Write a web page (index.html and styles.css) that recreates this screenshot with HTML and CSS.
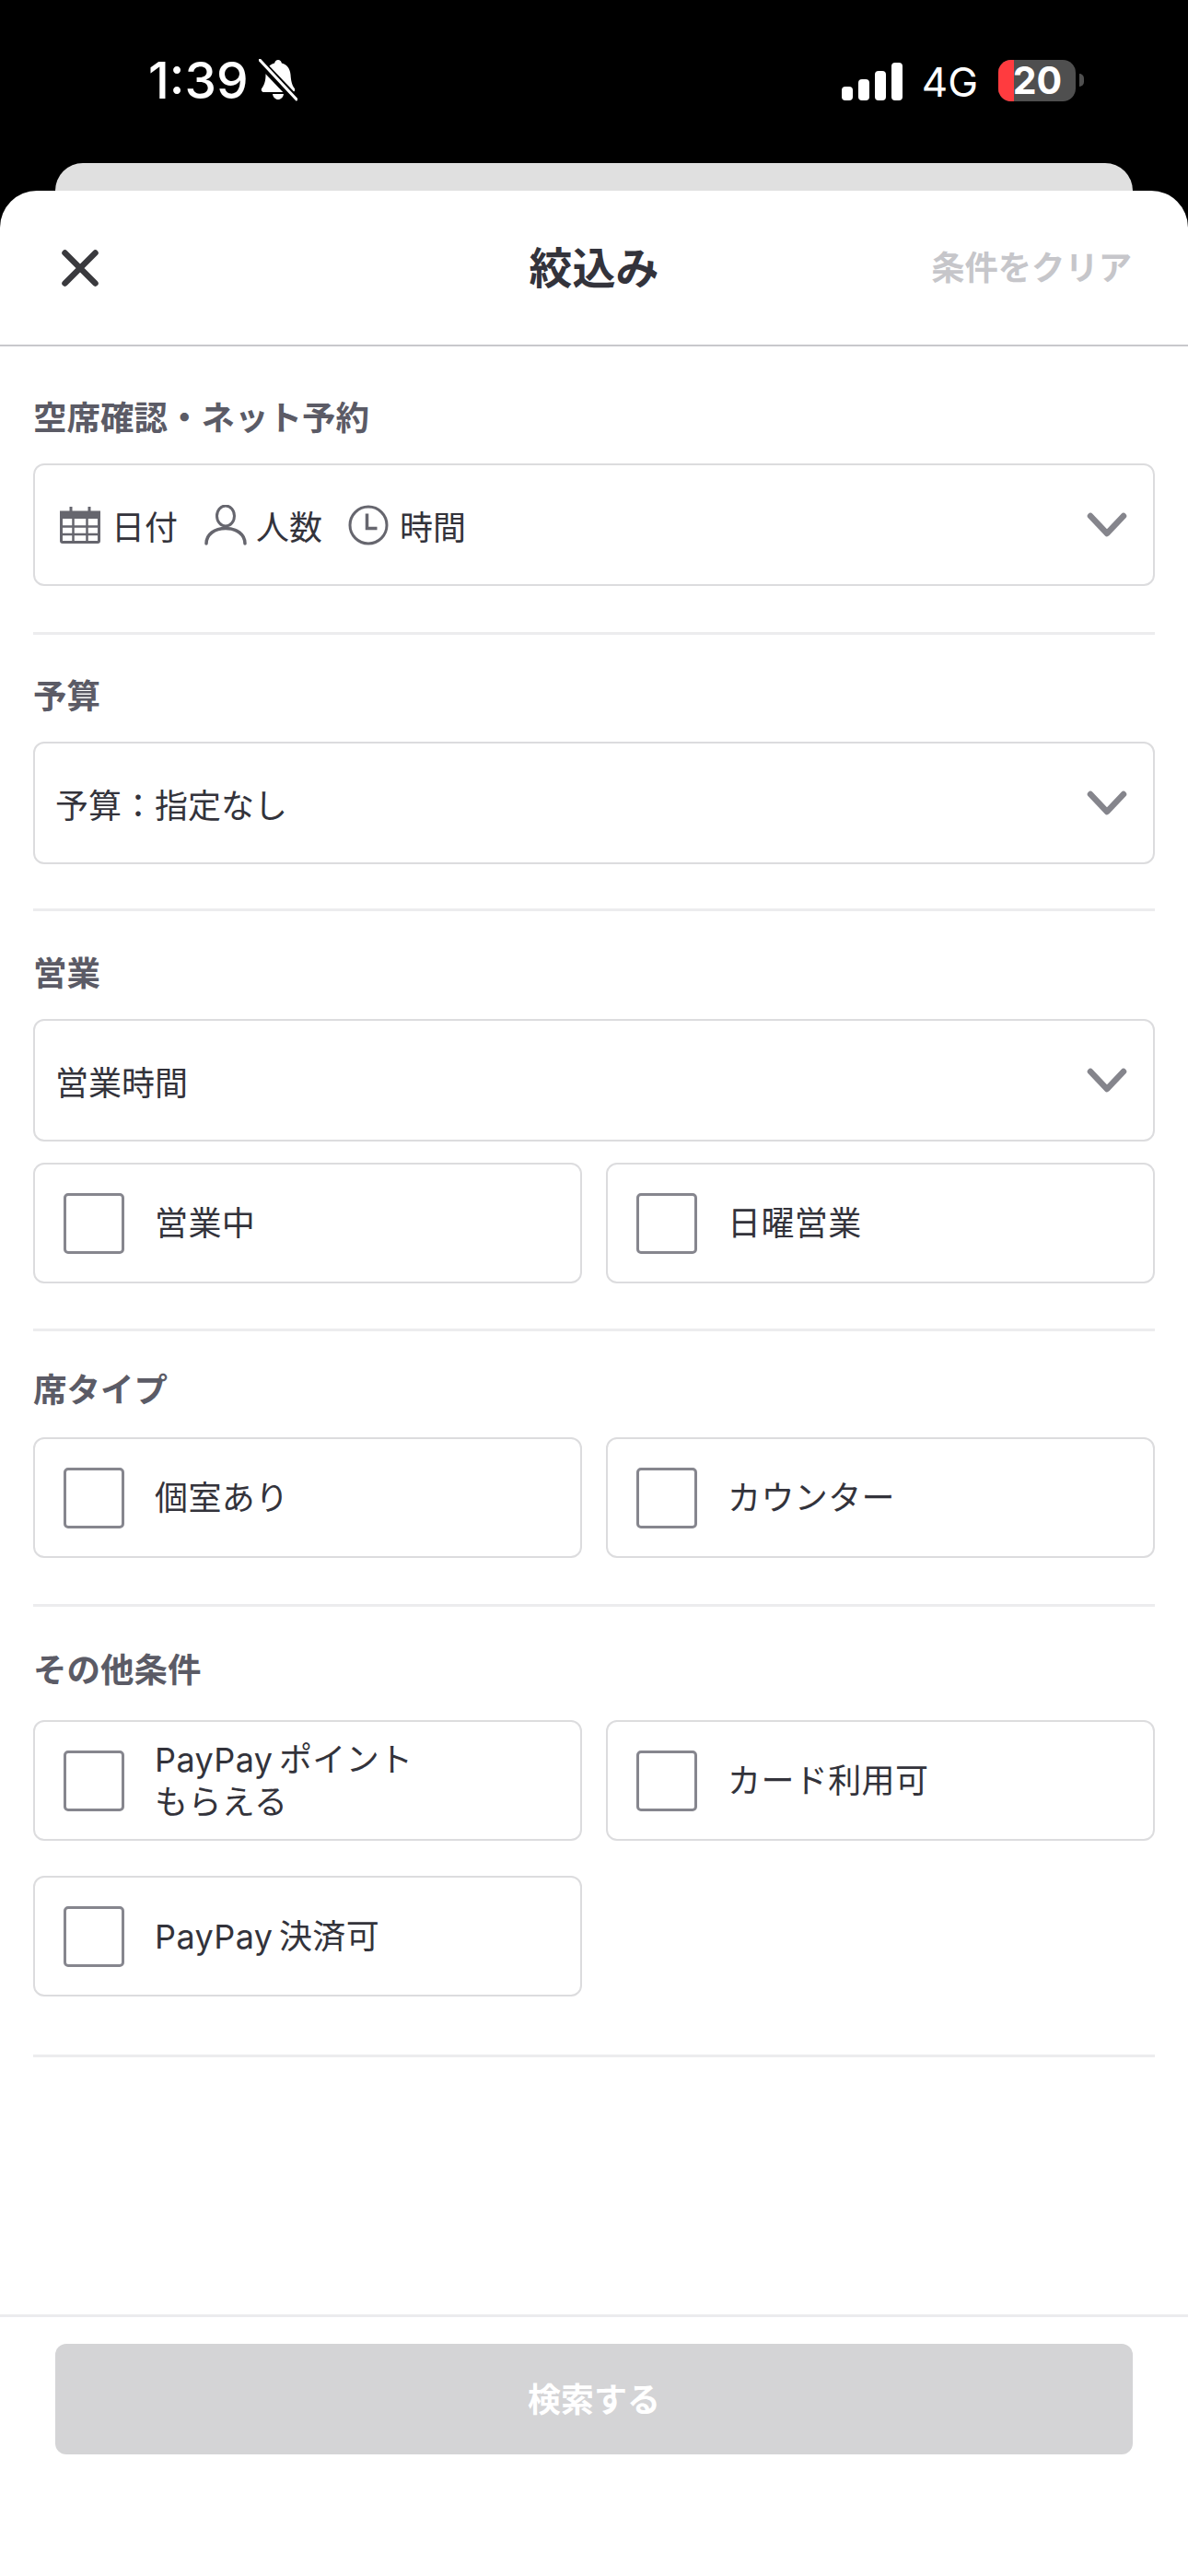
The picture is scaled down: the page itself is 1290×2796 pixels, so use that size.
FILE: index.html
```html
<!DOCTYPE html>
<html lang="ja">
<head>
    <meta charset="UTF-8">
    <meta name="viewport" content="width=device-width, initial-scale=1.0">
    <title>絞込み</title>
    <link rel="stylesheet" href="styles.css">
</head>
<body>
    <div class="status-bar">
        <div class="status-left">
            <span class="clock">1:39</span>
            <svg class="bell" width="42" height="46" viewBox="0 0 42 46">
                <path d="M21 1c2 0 3.500 1.500 3.800 3.500C31 6 34 11 34.500 17c.5 7 1.500 11 4 14.500 1.500 2 .5 4.500-2 4.500H5.500c-2.500 0-3.500-2.500-2-4.500C6 28 7.500 24 7.500 17 8 11 11 6 17.200 4.500 17.500 2.500 19 1 21 1z" fill="#fff"/>
                <path d="M15 38h12c-.5 3.500-3 6-6 6s-5.500-2.500-6-6z" fill="#fff"/>
                <path d="M-2 0L42 46" stroke="#000" stroke-width="9"/>
                <path d="M1 1L41 44" stroke="#fff" stroke-width="3" stroke-linecap="round"/>
            </svg>
        </div>
        <div class="status-right">
            <div class="signal">
                <span class="bar bar-1"></span>
                <span class="bar bar-2"></span>
                <span class="bar bar-3"></span>
                <span class="bar bar-4"></span>
            </div>
            <span class="network">4G</span>
            <div class="battery">
                <span class="battery-level"></span>
                <span class="battery-text">20</span>
            </div>
            <span class="battery-nub"></span>
        </div>
    </div>

    <div class="back-sheet"></div>

    <div class="sheet">
        <header class="sheet-header">
            <button class="close" aria-label="閉じる">
                <svg width="40" height="40" viewBox="0 0 40 40">
                    <path d="M3.500 3.500L36.500 36.500M36.500 3.500L3.500 36.500" stroke="#3a3a3e" stroke-width="6.500" fill="none" stroke-linecap="round"/>
                </svg>
            </button>
            <h1 class="sheet-title">絞込み</h1>
            <span class="clear">条件をクリア</span>
        </header>

        <section class="group group-first">
            <h3 class="group-label">空席確認・ネット予約</h3>
            <div class="select">
                <div class="select-items">
                    <svg class="icon icon-calendar" width="44" height="40" viewBox="0 0 44 40">
                        <path d="M1.500 6h41v31a1.500 1.500 0 0 1-1.500 1.500H3A1.500 1.500 0 0 1 1.500 37z" fill="none" stroke="#66666e" stroke-width="3"/>
                        <path d="M1.500 5h41v8h-41z" fill="#66666e"/>
                        <path d="M1.500 21.500h41M1.500 30h41M14.500 13v25M29.500 13v25" stroke="#66666e" stroke-width="2.500"/>
                        <path d="M12 0v7M32 0v7" stroke="#66666e" stroke-width="3"/>
                    </svg>
                    <span class="select-text">日付</span>
                    <svg class="icon icon-person" width="46" height="44" viewBox="0 0 46 44">
                        <ellipse cx="23" cy="12" rx="9.500" ry="11" fill="none" stroke="#66666e" stroke-width="3"/>
                        <path d="M2 42c0-10 9-16.500 21-16.500s21 6.500 21 16.500" fill="none" stroke="#66666e" stroke-width="3.500" stroke-linecap="round"/>
                    </svg>
                    <span class="select-text">人数</span>
                    <svg class="icon icon-clock" width="44" height="44" viewBox="0 0 44 44">
                        <circle cx="22" cy="22" r="20" fill="none" stroke="#66666e" stroke-width="3"/>
                        <path d="M20.500 9.500v16h11" fill="none" stroke="#66666e" stroke-width="3.500"/>
                    </svg>
                    <span class="select-text">時間</span>
                </div>
                <svg class="chevron" width="44" height="27" viewBox="0 0 44 27">
                    <path d="M4 4l18 19L40 4" fill="none" stroke="#85858c" stroke-width="6.500" stroke-linecap="round" stroke-linejoin="round"/>
                </svg>
            </div>
        </section>

        <section class="group group-budget">
            <h3 class="group-label">予算</h3>
            <div class="select">
                <span class="select-text">予算：指定なし</span>
                <svg class="chevron" width="44" height="27" viewBox="0 0 44 27">
                    <path d="M4 4l18 19L40 4" fill="none" stroke="#85858c" stroke-width="6.500" stroke-linecap="round" stroke-linejoin="round"/>
                </svg>
            </div>
        </section>

        <section class="group group-hours">
            <h3 class="group-label">営業</h3>
            <div class="select">
                <span class="select-text">営業時間</span>
                <svg class="chevron" width="44" height="27" viewBox="0 0 44 27">
                    <path d="M4 4l18 19L40 4" fill="none" stroke="#85858c" stroke-width="6.500" stroke-linecap="round" stroke-linejoin="round"/>
                </svg>
            </div>
            <div class="check-grid check-grid-spaced">
                <label class="check-card"><span class="check-box"></span><span class="check-text">営業中</span></label>
                <label class="check-card"><span class="check-box"></span><span class="check-text">日曜営業</span></label>
            </div>
        </section>

        <section class="group group-seats">
            <h3 class="group-label">席タイプ</h3>
            <div class="check-grid">
                <label class="check-card"><span class="check-box"></span><span class="check-text">個室あり</span></label>
                <label class="check-card"><span class="check-box"></span><span class="check-text">カウンター</span></label>
            </div>
        </section>

        <section class="group group-other">
            <h3 class="group-label">その他条件</h3>
            <div class="check-grid">
                <label class="check-card"><span class="check-box"></span><span class="check-text">PayPay ポイント<br>もらえる</span></label>
                <label class="check-card"><span class="check-box"></span><span class="check-text">カード利用可</span></label>
                <label class="check-card"><span class="check-box"></span><span class="check-text">PayPay 決済可</span></label>
            </div>
        </section>

        <footer class="sheet-footer">
            <button class="search" disabled>検索する</button>
        </footer>
    </div>
</body>
</html>
```

FILE: styles.css
```css
* {
    box-sizing: border-box;
}

html, body {
    height: 100%;
}

body {
    margin: 0;
    background-color: #000;
    font-family: "Noto Sans CJK JP", "Noto Sans", sans-serif;
    color: #33333b;
    display: flex;
    flex-direction: column;
}

/* status bar */
.status-bar {
    height: 177px;
    flex: none;
    padding: 64px 113px 0 161px;
    display: flex;
    justify-content: space-between;
    align-items: flex-start;
    color: #fff;
    font-family: Inter, "Liberation Sans", sans-serif;
}

.status-left {
    display: flex;
    align-items: center;
    gap: 11px;
}

.clock {
    font-size: 55px;
    line-height: 46px;
    font-weight: 500;
}

.status-right {
    display: flex;
    align-items: center;
    height: 46px;
}

.signal {
    display: flex;
    align-items: flex-end;
    gap: 6px;
    height: 41px;
    margin-top: 3px;
    margin-right: 21px;
}

.bar {
    width: 12px;
    background-color: #fff;
    border-radius: 4px;
}

.bar-1 { height: 15px; }
.bar-2 { height: 23px; }
.bar-3 { height: 32px; }
.bar-4 { height: 41px; }

.network {
    font-size: 44px;
    line-height: 46px;
    margin-right: 22px;
    margin-top: 3px;
}

.battery {
    position: relative;
    width: 84px;
    height: 45px;
    border-radius: 14px;
    background-color: #4f4f4f;
    display: flex;
    align-items: center;
    justify-content: center;
}

.battery-level {
    position: absolute;
    left: 0;
    top: 0;
    bottom: 0;
    width: 17px;
    background-color: #ff3b3f;
    border-radius: 14px 0 0 14px;
}

.battery-text {
    position: relative;
    font-size: 41px;
    line-height: 45px;
    font-weight: 700;
    margin-left: 1px;
}

.battery-nub {
    width: 5px;
    height: 14px;
    margin-left: 4px;
    background-color: #4f4f4f;
    border-radius: 0 7px 7px 0;
}

/* sheets */
.back-sheet {
    height: 30px;
    flex: none;
    margin: 0 60px;
    background-color: #e0e0e0;
    border-radius: 30px 30px 0 0;
}

.sheet {
    flex: 1;
    background-color: #fff;
    border-radius: 40px 40px 0 0;
    display: flex;
    flex-direction: column;
}

.sheet-header {
    height: 169px;
    flex: none;
    padding: 0 61px 0 67px;
    border-bottom: 2px solid #c8c8cc;
    display: flex;
    align-items: center;
    justify-content: space-between;
    position: relative;
}

.close {
    padding: 0;
    border: none;
    background: none;
    display: flex;
}

.sheet-title {
    position: absolute;
    left: 0;
    right: 0;
    margin: 0 0 6px;
    text-align: center;
    font-size: 47px;
    font-weight: 700;
    color: #33333b;
    pointer-events: none;
}

.clear {
    margin-bottom: 5px;
    font-size: 36.300px;
    font-weight: 700;
    color: #c6c6ca;
}

/* filter groups */
.group {
    margin: 0 36px;
    border-bottom: 3px solid #ececee;
}

.group-first {
    padding: 54px 0 50px;
}

.group-budget {
    padding: 43px 0 48px;
}

.group-hours {
    padding: 44px 0 49px;
}

.group-seats {
    padding: 40px 0 50px;
}

.group-other {
    padding: 45px 0 63px;
}

.group-label {
    margin: 0 0 29px;
    font-size: 36.500px;
    line-height: 44px;
    font-weight: 700;
    color: #5b5b66;
}

.group-seats .group-label {
    margin-bottom: 31px;
}

.group-other .group-label {
    margin-bottom: 34px;
}

.select {
    height: 133px;
    padding: 0 28px 0 22px;
    border: 2px solid #dcdcde;
    border-radius: 12px;
    display: flex;
    align-items: center;
    justify-content: space-between;
}

.select-items {
    display: flex;
    align-items: center;
    padding-left: 5px;
}

.select-text {
    font-size: 36px;
    color: #33333b;
}

.icon-calendar {
    margin-right: 12px;
}

.icon-person {
    margin-left: 29px;
    margin-right: 10px;
}

.icon-clock {
    margin-left: 28px;
    margin-right: 12px;
}

.check-grid {
    display: grid;
    grid-template-columns: 1fr 1fr;
    gap: 38px 26px;
}

.check-grid-spaced {
    margin-top: 23px;
}

.check-card {
    height: 131px;
    padding: 0 31px;
    border: 2px solid #dcdcde;
    border-radius: 12px;
    display: flex;
    align-items: center;
}

.check-box {
    width: 66px;
    height: 66px;
    flex: none;
    border: 3px solid #86868e;
    border-radius: 5px;
    margin-right: 33px;
}

.check-text {
    font-family: Inter, "Noto Sans CJK JP", sans-serif;
    font-size: 36px;
    line-height: 46px;
    letter-spacing: .4px;
    word-spacing: -4px;
    color: #33333b;
}

/* bottom action */
.sheet-footer {
    margin-top: auto;
    height: 284px;
    flex: none;
    padding: 29px 60px 0;
    border-top: 3px solid #ececee;
}

.search {
    width: 100%;
    height: 120px;
    padding: 0 0 4px;
    border: none;
    border-radius: 12px;
    background-color: #d4d4d6;
    color: #fff;
    font-family: inherit;
    font-size: 36px;
    font-weight: 700;
}
```
